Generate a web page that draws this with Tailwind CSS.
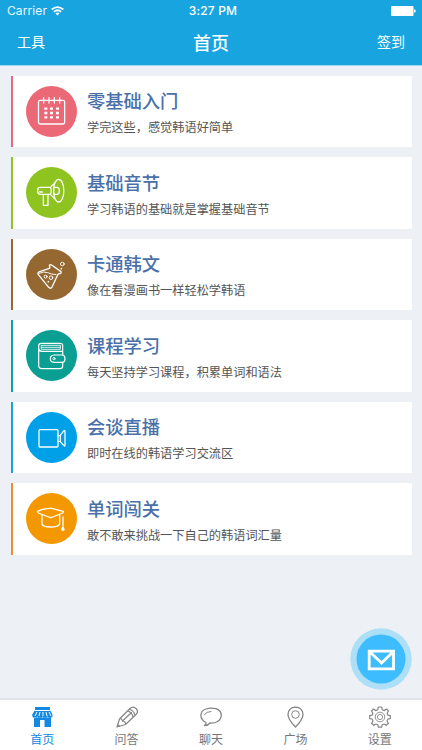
<!DOCTYPE html>
<html lang="zh-CN">
<head>
<meta charset="utf-8">
<meta name="viewport" content="width=device-width, initial-scale=1">
<title>首页</title>
<script src="https://cdn.jsdelivr.net/npm/@tailwindcss/browser@4"></script>
</head>
<body class="relative flex h-[750px] w-[422px] flex-col overflow-hidden bg-[#edf1f6] font-['Inter','Noto_Sans_CJK_SC',sans-serif]">
<header class="h-[66px] shrink-0 border-b border-[#9bdcf3] bg-[#18a5df] text-white">
  <div class="grid h-[22px] grid-cols-3 items-center pr-[6px] pl-[7px] text-[12px] leading-[22px]">
    <div class="flex items-center gap-[4px]"><span class="tracking-[0.1px] opacity-90">Carrier</span>
      <svg class="h-[10px] w-[13px]" viewBox="0 0 13 10" fill="none" stroke="white" stroke-width="1.7"><path d="M.7 3.5Q6.5-1.4 12.3 3.5M2.9 5.8Q6.5 2.7 10.1 5.8"/><path d="M4.5 7.4Q6.5 5.8 8.5 7.4L6.5 9.5Z" fill="white" stroke="none"/></svg>
    </div>
    <div class="pl-[3px] text-center font-medium tracking-[0.15px] whitespace-nowrap">3:27 PM</div>
    <svg class="h-[10px] w-[25px] justify-self-end" viewBox="0 0 25 10" fill="white"><rect width="22.5" height="10" rx="1"/><path d="M23.2 3.2Q24.8 3.4 24.8 5T23.2 6.8Z"/></svg>
  </div>
  <div class="grid h-[43px] grid-cols-3 items-center px-[17px]">
    <span class="pb-[3px] text-[14px] leading-5">工具</span>
    <h1 class="pt-px text-center text-[18px] leading-6 font-medium">首页</h1>
    <span class="pb-[3px] text-right text-[14px] leading-5">签到</span>
  </div>
</header>

<main class="flex flex-1 flex-col gap-[10px] pt-[9.5px] pr-[10.5px] pl-[10.5px]">
  <section class="flex h-[71.5px] shrink-0 items-center border-l-[2px] border-[#e8697c] bg-white pl-[13.5px]">
    <svg class="size-[51px] shrink-0" viewBox="78 60 153 153" fill="none" stroke="white" stroke-width="3.8" stroke-linecap="round" stroke-linejoin="round"><circle cx="154.500" cy="136.500" r="76.500" fill="#eb6877" stroke="none"/><rect x="115.500" y="103" width="78.500" height="71" rx="5"/><path d="M131 95v16M147 95v16M163 95v16M179 95v16"/><path d="M133 128h9M150 128h9M168 128h9M133 141h9M150 141h9M168 141h9M133 154h9M150 154h9M168 154h9" stroke-width="7" stroke-linecap="butt"/></svg>
    <div class="pt-[7px] pl-[10px]"><h2 class="text-[18.3px] leading-[26px] font-medium text-[#4a70a9]">零基础入门</h2><p class="text-[12.2px] leading-[27px] text-[#555555]">学完这些，感觉韩语好简单</p></div>
  </section>
  <section class="flex h-[71.5px] shrink-0 items-center border-l-[2px] border-[#8fc326] bg-white pl-[13.5px]">
    <svg class="size-[51px] shrink-0" viewBox="78 51 153 153" fill="none" stroke="white" stroke-width="3.800" stroke-linecap="round" stroke-linejoin="round"><circle cx="154.500" cy="127.500" r="76.500" fill="#8fc31f" stroke="none"/><ellipse cx="176" cy="122" rx="15.500" ry="34"/><path d="M165 98L151 112H119Q113 112 113 122T119 133H151L165 147M151 112Q157 122 151 133M161 112V132M161 112H172Q178 113 178 122T172 133H161M130 133V166H144V134M119 126H127"/></svg>
    <div class="pt-[7px] pl-[10px]"><h2 class="text-[18.3px] leading-[26px] font-medium text-[#4a70a9]">基础音节</h2><p class="text-[12.2px] leading-[27px] text-[#555555]">学习韩语的基础就是掌握基础音节</p></div>
  </section>
  <section class="flex h-[71.5px] shrink-0 items-center border-l-[2px] border-[#956834] bg-white pl-[13.5px]">
    <svg class="size-[51px] shrink-0" viewBox="78 56 153 153" fill="none" stroke="white" stroke-width="4" stroke-linecap="round" stroke-linejoin="round"><circle cx="154.500" cy="132.500" r="76.500" fill="#956831" stroke="none"/><path d="M148 105Q151 101 155 104L183 124Q185 128 181 130Q176 129 174 132L156 170Q152 177 146 171L115 133Q111 127 119 124L146 115Q152 113 148 105Z"/><path d="M117 129Q132 122 143 127T168 133" stroke-width="2.800"/><g stroke-width="2.800"><circle cx="137" cy="139" r="4.500"/><circle cx="153" cy="142" r="5.500"/><circle cx="187" cy="101" r="5.500"/></g><g fill="white" stroke="none"><circle cx="145" cy="154" r="2.500"/><circle cx="184" cy="115" r="2.500"/></g></svg>
    <div class="pt-[7px] pl-[10px]"><h2 class="text-[18.3px] leading-[26px] font-medium text-[#4a70a9]">卡通韩文</h2><p class="text-[12.2px] leading-[27px] text-[#555555]">像在看漫画书一样轻松学韩语</p></div>
  </section>
  <section class="flex h-[71.5px] shrink-0 items-center border-l-[2px] border-[#14a094] bg-white pl-[13.5px]">
    <svg class="size-[51px] shrink-0" viewBox="78 60 153 153" fill="none" stroke="white" stroke-width="3.600" stroke-linecap="round" stroke-linejoin="round"><circle cx="154.500" cy="136.500" r="76.500" fill="#0a9f92" stroke="none"/><path d="M188 135V106Q188 100 180 100H124Q116 100 116 108V166Q116 176 126 176H180Q188 176 188 168V157M116 116Q117 124 126 124H188"/><path d="M125 106H181V118H125ZM125 112H181" stroke-width="2.500"/><path d="M188 135H162Q151 136 151 146T162 157H188Q195 156 195 146T188 135Z"/><circle cx="162" cy="146" r="3.500" stroke-width="2.500"/></svg>
    <div class="pt-[7px] pl-[10px]"><h2 class="text-[18.3px] leading-[26px] font-medium text-[#4a70a9]">课程学习</h2><p class="text-[12.2px] leading-[27px] text-[#555555]">每天坚持学习课程，积累单词和语法</p></div>
  </section>
  <section class="flex h-[71.5px] shrink-0 items-center border-l-[2px] border-[#1c9edb] bg-white pl-[13.5px]">
    <svg class="size-[51px] shrink-0" viewBox="78 59 153 153" fill="none" stroke="white" stroke-width="3.800" stroke-linecap="round" stroke-linejoin="round"><circle cx="154.500" cy="135.500" r="76.500" fill="#00a0e9" stroke="none"/><rect x="117" y="112" width="57" height="52" rx="3"/><path d="M174 130H180L192 115Q195 113 195 118V158Q195 163 192 160L180 147H174M181 130V147"/></svg>
    <div class="pt-[7px] pl-[10px]"><h2 class="text-[18.3px] leading-[26px] font-medium text-[#4a70a9]">会谈直播</h2><p class="text-[12.2px] leading-[27px] text-[#555555]">即时在线的韩语学习交流区</p></div>
  </section>
  <section class="flex h-[71.5px] shrink-0 items-center border-l-[2px] border-[#ee8c35] bg-white pl-[13.5px]">
    <svg class="size-[51px] shrink-0" viewBox="78 57 153 153" fill="none" stroke="white" stroke-width="3.800" stroke-linecap="round" stroke-linejoin="round"><circle cx="154.500" cy="133.500" r="76.500" fill="#f39800" stroke="none"/><path d="M113 112Q125 105 148 103Q153 102 158 104L190 112Q192 114 188 117L158 129Q152 132 146 129L115 117Q111 114 113 112ZM126 123V150Q128 159 152 159T179 150V122M189 129V156"/><path d="M188.500 156Q182 166 183 168Q188 174 194 168Q195 165 188.500 156Z" fill="white" stroke="none"/></svg>
    <div class="pt-[7px] pl-[10px]"><h2 class="text-[18.3px] leading-[26px] font-medium text-[#4a70a9]">单词闯关</h2><p class="text-[12.2px] leading-[27px] text-[#555555]">敢不敢来挑战一下自己的韩语词汇量</p></div>
  </section>
</main>

<button aria-label="消息" class="absolute top-[628px] left-[350px] size-[62px] rounded-full">
  <svg class="size-[62px]" viewBox="0 0 62 62" fill="none"><circle cx="31" cy="31" r="30.700" fill="#addff7"/><circle cx="31" cy="31" r="24.500" fill="#3dbdff"/><path d="M19.200 23.200H43.500V40.800H19.200ZM20 24L31.500 35L43 24" stroke="white" stroke-width="2.800"/></svg>
</button>

<nav class="grid h-[52px] shrink-0 grid-cols-5 border-t-2 border-[#e1e3e6] bg-white text-[12px] leading-[18px] text-[#777777]">
  <a class="flex flex-col items-center pt-[6px] text-[#1187df]"><svg class="h-[22px] w-[22px]" viewBox="0 0 22 22" fill="none"><path d="M4 1H19V5H4ZM4 4L1.200 8.500Q1 12 4 12Q6 12 6.500 10.500Q9 13 11.500 10.500Q14 13 16.500 10.500Q18 12 20 11.500Q22 11 21.500 8.500L19 4ZM3 11.500H20V21H3Z" fill="#1389e3"/><path d="M6 6L4 10M9 6L8 10M12 6V10M15 6L16 10M18 6L20 10" stroke="white" stroke-width="1"/><path d="M9 14H13.500V21H9Z" fill="white"/></svg><span class="mt-[3px]">首页</span></a>
  <a class="flex flex-col items-center pt-[6px]"><svg class="h-[22px] w-[22px]" viewBox="0 0 22 22" fill="none" stroke="#858585" stroke-width="1.200" stroke-linejoin="round" stroke-linecap="round"><path d="M1 21L3.500 13L14 2.500Q17-.5 20 2.500T20 8.500L9.500 18.500L1 21M3.500 13Q5.500 12 6.500 15Q10 15.500 9.500 18.500M13 3.500Q18 4 19 9.500M11.500 5Q16 6 17 11M6.500 15L15.500 6.500M1.700 18.500L3.500 20.300"/></svg><span class="mt-[3px]">问答</span></a>
  <a class="flex flex-col items-center pt-[6px]"><svg class="h-[22px] w-[22px]" viewBox="0 0 22 22" fill="none" stroke="#858585" stroke-width="1.300" stroke-linejoin="round" stroke-linecap="round"><path d="M6 16.500C-1 13-.5 5 6 3C12 .8 21 2.500 21.300 9C21.300 15 15 17.500 10 17Q8 19.500 4.500 19.500Q6.500 18 6 16.500Z"/><path d="M4.500 8.500Q6.500 5.500 11 5.500" stroke-width="1"/></svg><span class="mt-[3px]">聊天</span></a>
  <a class="flex flex-col items-center pt-[6px]"><svg class="h-[22px] w-[22px]" viewBox="0 0 22 22" fill="none" stroke="#858585" stroke-width="1.300" stroke-linejoin="round"><path d="M11.500 21Q4 13.500 4 8.500Q4.500 1.500 11.500 1.200Q18.500 1.500 19 8.500Q19 13.500 11.500 21Z"/><circle cx="11.500" cy="8.500" r="3.800" stroke-width="1"/></svg><span class="mt-[3px]">广场</span></a>
  <a class="flex flex-col items-center pt-[6px]"><svg class="h-[22px] w-[22px]" viewBox="0 0 22 22" fill="none" stroke="#858585" stroke-width="1.200" stroke-linejoin="round"><path d="M9.300 1H12.700L13.200 3.700L15.300 4.600L17.500 3L19.500 5L18.200 7.300L18.900 9.200L21.300 9.600V12.600L18.900 13L18 15L19.400 17.200L17.200 19.300L15 18L13.200 18.700L12.700 21.200H9.300L8.800 18.700L7 18L4.800 19.300L2.600 17.200L4 15L3.100 13L.7 12.600V9.600L3.100 9.200L3.800 7.300L2.500 5L4.500 3L6.700 4.600L8.800 3.700Z"/><circle cx="11" cy="11" r="4.800" stroke-width=".9"/><circle cx="11" cy="11" r="2.600" stroke-width=".9"/></svg><span class="mt-[3px]">设置</span></a>
</nav>
</body>
</html>
